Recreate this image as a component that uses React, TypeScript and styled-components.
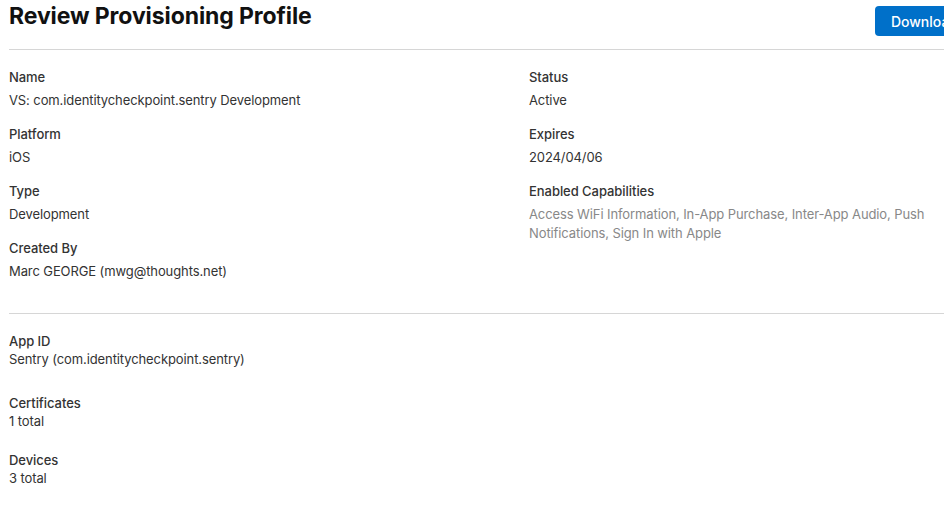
import styled, { createGlobalStyle } from "styled-components";

const GlobalStyle = createGlobalStyle`
  html, body {
    margin: 0;
    padding: 0;
    background: #ffffff;
    overflow: hidden;
  }
  body {
    font-family: Inter, "Helvetica Neue", "Liberation Sans", Arial, sans-serif;
    color: #333333;
    -webkit-font-smoothing: antialiased;
  }
`;

interface Field {
  label: string;
  value: string;
  muted?: boolean;
}

const leftFields: Field[] = [
  { label: "Name", value: "VS: com.identitycheckpoint.sentry Development" },
  { label: "Platform", value: "iOS" },
  { label: "Type", value: "Development" },
  { label: "Created By", value: "Marc GEORGE (mwg@thoughts.net)" },
];

const rightFields: Field[] = [
  { label: "Status", value: "Active" },
  { label: "Expires", value: "2024/04/06" },
  {
    label: "Enabled Capabilities",
    value:
      "Access WiFi Information, In-App Purchase, Inter-App Audio, Push Notifications, Sign In with Apple",
    muted: true,
  },
];

const summary = [
  { label: "App ID", value: "Sentry (com.identitycheckpoint.sentry)", space: 25 },
  { label: "Certificates", value: "1 total", space: 20 },
  { label: "Devices", value: "3 total", space: 0 },
];

export default function App() {
  return (
    <>
      <GlobalStyle />
      <Page>
        <Header>
          <Title>Review Provisioning Profile</Title>
          <DownloadButton>Download</DownloadButton>
        </Header>

        <Details>
          <Column>
            {leftFields.map((f) => (
              <FieldBlock key={f.label}>
                <Label>{f.label}</Label>
                <Value $muted={f.muted}>{f.value}</Value>
              </FieldBlock>
            ))}
          </Column>
          <Column>
            {rightFields.map((f) => (
              <FieldBlock key={f.label}>
                <Label>{f.label}</Label>
                <Value $muted={f.muted}>{f.value}</Value>
              </FieldBlock>
            ))}
          </Column>
        </Details>

        <Summary>
          {summary.map((s) => (
            <SummaryItem key={s.label} $space={s.space}>
              <Label>{s.label}</Label>
              <SummaryValue>{s.value}</SummaryValue>
            </SummaryItem>
          ))}
        </Summary>
      </Page>
    </>
  );
}

const Page = styled.div`
  width: 965px;
  padding-left: 9px;
`;

const Header = styled.header`
  display: flex;
  justify-content: space-between;
  align-items: flex-start;
  height: 50px;
  border-bottom: 1px solid #d6d6d6;
  box-sizing: border-box;
`;

const Title = styled.h1`
  margin: 2px 0 0;
  font-size: 23px;
  line-height: 28px;
  font-weight: 700;
  color: #111111;
  letter-spacing: -0.1px;
`;

const DownloadButton = styled.button`
  margin-top: 6px;
  height: 30px;
  padding: 0 16px;
  border: none;
  border-radius: 4px;
  background: #0070c9;
  color: #ffffff;
  font-family: inherit;
  font-size: 14px;
  font-weight: 500;
  cursor: pointer;
`;

const Details = styled.section`
  display: grid;
  grid-template-columns: 520px 1fr;
  padding: 18px 0 32px;
  border-bottom: 1px solid #d6d6d6;
`;

const Column = styled.div`
  display: flex;
  flex-direction: column;
  gap: 15px;
  padding-right: 20px;
`;

const FieldBlock = styled.div`
  display: flex;
  flex-direction: column;
  gap: 5px;
`;

const Label = styled.div`
  font-size: 13px;
  line-height: 18px;
  font-weight: 500;
  color: #333333;
  letter-spacing: -0.05px;
`;

const Value = styled.div<{ $muted?: boolean }>`
  font-size: 13px;
  line-height: 19px;
  font-weight: 400;
  letter-spacing: -0.1px;
  color: ${(p) => (p.$muted ? "#888888" : "#333333")};
  max-width: 410px;
`;

const Summary = styled.section`
  display: flex;
  flex-direction: column;
  padding-top: 18px;
`;

const SummaryItem = styled.div<{ $space: number }>`
  display: flex;
  flex-direction: column;
  margin-bottom: ${(p) => p.$space}px;
`;

const SummaryValue = styled.div`
  font-size: 13px;
  line-height: 19px;
  letter-spacing: -0.1px;
  color: #333333;
`;
